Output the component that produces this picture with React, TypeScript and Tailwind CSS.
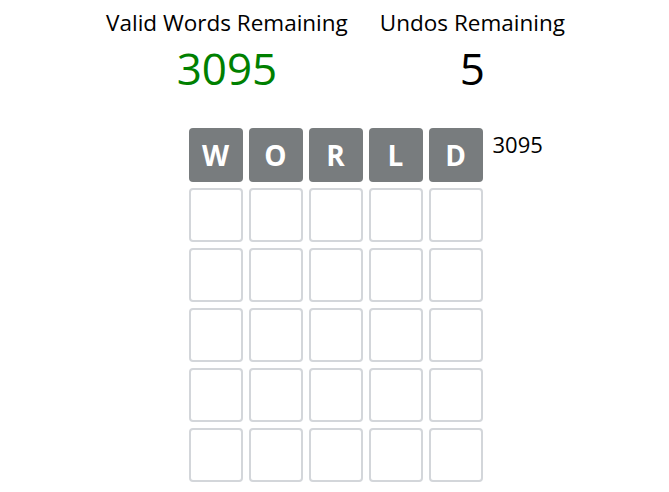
const ROWS = 6;
const guesses = ["WORLD"];

const Tile = ({ letter }: { letter?: string }) =>
  letter ? (
    <div className="flex h-[54px] w-[54px] items-center justify-center rounded-[4px] bg-[#787c7e] text-[28px] font-bold text-white">
      {letter}
    </div>
  ) : (
    <div className="h-[54px] w-[54px] rounded-[4px] border-2 border-[#d3d6da]" />
  );

const Stat = ({ label, value, color }: { label: string; value: number; color: string }) => (
  <div className="flex flex-col items-center px-4">
    <div className="text-[22.5px] leading-[30px]">{label}</div>
    <div className={`mt-[4px] text-[44px] leading-[52px] ${color}`}>{value}</div>
  </div>
);

export default function App() {
  return (
    <div className="flex min-h-screen flex-col items-center bg-white pl-[2px] pt-[8px] text-black [font-family:'Open_Sans',sans-serif]">
      <div className="flex">
        <Stat label="Valid Words Remaining" value={3095} color="text-[#008000]" />
        <Stat label="Undos Remaining" value={5} color="text-black" />
      </div>
      <div className="mt-[34px] grid w-full grid-cols-[1fr_auto_1fr]">
        <div />
        <div className="flex flex-col gap-[6px]">
          {Array.from({ length: ROWS }).map((_, r) => (
            <div key={r} className="flex gap-[6px]">
              {Array.from({ length: 5 }).map((_, c) => (
                <Tile key={c} letter={guesses[r]?.[c]} />
              ))}
            </div>
          ))}
        </div>
        <div className="pl-[10px] pt-[2px]">
          <div className="text-[22px] leading-[28px]">3095</div>
        </div>
      </div>
    </div>
  );
}
